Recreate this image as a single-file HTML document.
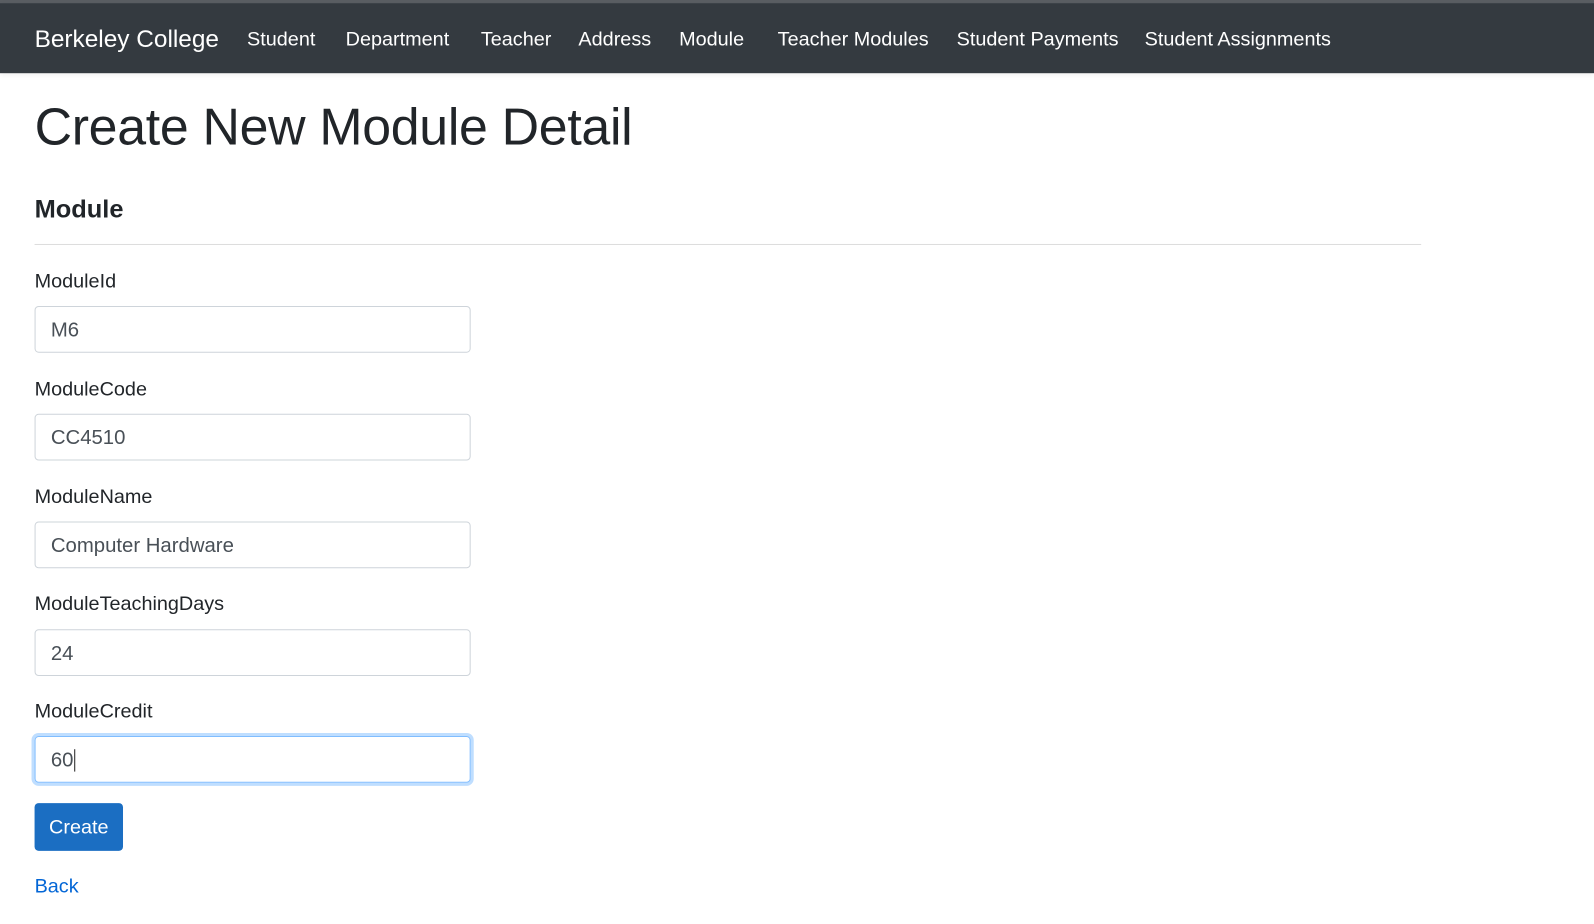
<!DOCTYPE html>
<html><head><style>
body{margin:0;background:#fff;font-family:"Liberation Sans",sans-serif;color:#212529;width:1594px;height:924px;overflow:hidden;position:relative}
#w{position:absolute;left:0;top:0;width:1568px;height:909px;transform:scale(1.01658);transform-origin:0 0}
.top{height:3px;background:#5a5e63}
nav{height:69px;background:#343a40;position:relative;box-shadow:0 2px 6px rgba(0,0,0,.08)}
nav span{position:absolute;top:25px;color:#fff;font-size:19.5px;white-space:nowrap}
nav .brand{font-size:24px;top:22px;left:34px}
h1{position:absolute;left:34px;top:95px;margin:0;font-size:51px;font-weight:500;letter-spacing:-.3px}
h4{position:absolute;left:34px;top:192px;margin:0;font-size:25px;font-weight:600}
hr{position:absolute;left:34px;top:240px;width:1364px;margin:0;border:0;border-top:1px solid #ddd}
label{position:absolute;left:34px;font-size:19.5px}
.in{position:absolute;left:34px;width:427px;height:44px;border:1px solid #ced4da;border-radius:4px;font-size:20px;color:#495057;line-height:46px;text-indent:15px;box-sizing:content-box}
.f{border-color:#80bdff;box-shadow:0 0 0 3px rgba(0,123,255,.25)}
.btn{position:absolute;left:34px;top:790px;width:87px;height:47px;background:#1b6ec2;border-radius:4px;color:#fff;font-size:19.5px;line-height:48px;text-align:center}
.back{position:absolute;left:34px;top:861px;color:#0366d6;font-size:19.5px}
</style></head><body><div id="w">
<div class="top"></div>
<nav>
<span class="brand">Berkeley College</span>
<span style="left:243px">Student</span>
<span style="left:340px">Department</span>
<span style="left:473px">Teacher</span>
<span style="left:569px">Address</span>
<span style="left:668px">Module</span>
<span style="left:765px">Teacher Modules</span>
<span style="left:941px">Student Payments</span>
<span style="left:1126px">Student Assignments</span>
</nav>
<h1>Create New Module Detail</h1>
<h4>Module</h4>
<hr>
<label style="top:266px">ModuleId</label>
<div class="in" style="top:301px">M6</div>
<label style="top:372px">ModuleCode</label>
<div class="in" style="top:407px">CC4510</div>
<label style="top:478px">ModuleName</label>
<div class="in" style="top:513px">Computer Hardware</div>
<label style="top:583px">ModuleTeachingDays</label>
<div class="in" style="top:619px">24</div>
<label style="top:689px">ModuleCredit</label>
<div class="in f" style="top:724px">60<span style="border-left:1px solid #222;margin-left:1px"></span></div>
<div class="btn">Create</div>
<div class="back">Back</div>
</div></body></html>
